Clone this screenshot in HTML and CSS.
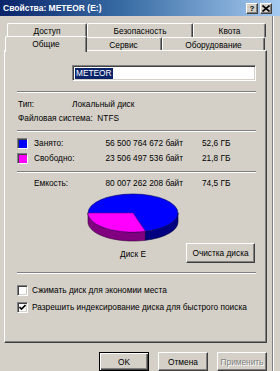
FILE: index.html
```html
<!DOCTYPE html>
<html lang="ru">
<head>
<meta charset="utf-8">
<title>Свойства: METEOR (E:)</title>
<link rel="stylesheet" href="styles.css">
</head>
<body>
<div class="window">
  <div class="titlebar">
    <span class="title">Свойства: METEOR (E:)</span>
    <div class="tbtns">
      <span class="tbtn">?</span>
      <span class="tbtn tclose">
        <svg width="8" height="7" viewBox="0 0 8 7"><path d="M0.5 0.5 L7.5 6.5 M7.5 0.5 L0.5 6.5" stroke="#000" stroke-width="1.6"/></svg>
      </span>
    </div>
  </div>
  <div class="client">
    <div class="tabs">
      <div class="tabrow row1">
        <div class="tab t-access">Доступ</div>
        <div class="tab t-sec">Безопасность</div>
        <div class="tab t-quota">Квота</div>
      </div>
      <div class="tabrow row2">
        <div class="tab t-general active">Общие</div>
        <div class="tab t-service">Сервис</div>
        <div class="tab t-hw">Оборудование</div>
      </div>
    </div>
    <div class="panel">
      <div class="name-row">
        <div class="field"><span class="sel">METEOR</span></div>
      </div>
      <div class="sep s1"></div>
      <div class="info-row r-type"><span class="lbl">Тип:</span><span class="val">Локальный диск</span></div>
      <div class="info-row r-fs"><span>Файловая система:&nbsp; NTFS</span></div>
      <div class="sep s2"></div>
      <div class="stat-row r-used">
        <span class="swatch used"></span><span class="slbl">Занято:</span><span class="bytes">56 500 764 672 байт</span><span></span><span class="gb">52,6 ГБ</span>
      </div>
      <div class="stat-row r-free">
        <span class="swatch free"></span><span class="slbl">Свободно:</span><span class="bytes">23 506 497 536 байт</span><span></span><span class="gb">21,8 ГБ</span>
      </div>
      <div class="sep s3"></div>
      <div class="stat-row r-cap">
        <span></span><span class="slbl">Емкость:</span><span class="bytes">80 007 262 208 байт</span><span></span><span class="gb">74,5 ГБ</span>
      </div>
      <div class="pie-area">
        <div class="pie-col">
          <svg class="pie" width="94" height="49" viewBox="0 0 94 49">
            <path d="M2 20 A45 19 0 0 0 59.4 38.3 L59.4 47.3 A45 19 0 0 1 2 29 Z" fill="#800080" stroke="#400040" stroke-width="0.6"/>
            <path d="M59.4 38.3 A45 19 0 0 0 92 20 L92 29 A45 19 0 0 1 59.4 47.3 Z" fill="#000080" stroke="#000040" stroke-width="0.6"/>
            <ellipse cx="47" cy="20" rx="45" ry="19" fill="#0000ff" stroke="#000060" stroke-width="0.6"/>
            <path d="M47 20 L2 20 A45 19 0 0 0 59.4 38.3 Z" fill="#ff00ff" stroke="#600060" stroke-width="0.5"/>
          </svg>
          <div class="pie-label">Диск E</div>
        </div>
        <div class="btn-col">
          <div class="btn cleanup">Очистка диска</div>
        </div>
      </div>
      <div class="sep s4"></div>
      <div class="check-row c1"><span class="cb"></span><span>Сжимать диск для экономии места</span></div>
      <div class="check-row c2"><span class="cb checked"><svg width="7" height="7" viewBox="0 0 7 7"><path d="M0.5 3 L2.5 5 L6.5 1" fill="none" stroke="#000" stroke-width="1.6"/></svg></span><span>Разрешить индексирование диска для быстрого поиска</span></div>
    </div>
    <div class="buttons">
      <div class="btn default">OK</div>
      <div class="btn">Отмена</div>
      <div class="btn disabled">Применить</div>
    </div>
  </div>
</div>
</body>
</html>
```

FILE: styles.css
```css
* { box-sizing: border-box; }
html, body { margin: 0; padding: 0; }
body {
  width: 280px;
  height: 371px;
  overflow: hidden;
  background: #d4d0c8;
  font-family: "Liberation Sans", Arial, sans-serif;
  font-size: 8.3px;
  color: #000;
}
.window {
  width: 280px;
  height: 371px;
  background: #d4d0c8;
}
.titlebar {
  height: 16px;
  background: linear-gradient(to right, #0a246a, #3a6ea5 45%, #a6caf0);
  display: flex;
  align-items: center;
  justify-content: space-between;
  padding: 0 8px 0 3px;
}
.title {
  color: #fff;
  font-weight: bold;
  font-size: 8.5px;
}
.tbtns { display: flex; gap: 2px; }
.tbtn {
  width: 12px;
  height: 11px;
  background: #d4d0c8;
  border: 1px solid;
  border-color: #fff #404040 #404040 #fff;
  box-shadow: inset -1px -1px 0 #808080;
  font-weight: bold;
  font-size: 8px;
  line-height: 9px;
  text-align: center;
  display: flex;
  align-items: center;
  justify-content: center;
}
.client {
  width: 273px;
  height: 355px;
  border-right: 1px solid #808080;
  box-shadow: 1px 0 0 #fff;
  padding-top: 7px;
}
.tabs {
  height: 27px;
  position: relative;
}
.tabrow { display: flex; height: 14px; }
.row1 { margin-left: 7px; }
.row2 { margin-left: 7px; height: 13px; }
.tab {
  height: 100%;
  border-top: 1px solid #fff;
  border-left: 1px solid #fff;
  border-right: 1px solid #404040;
  box-shadow: inset -1px 0 0 #808080;
  border-radius: 2px 2px 0 0;
  display: flex;
  align-items: center;
  justify-content: center;
  padding-top: 1px;
}
.t-access { width: 80px; }
.t-sec { width: 106px; }
.t-quota { width: 73px; }
.t-general { width: 79px; }
.t-service { width: 77px; }
.t-hw { width: 103px; }
.tab.active {
  position: relative;
  z-index: 2;
  height: 16px;
  margin-left: -2px;
  width: 82px;
  margin-top: -1px;
  margin-right: -2px;
  background: #d4d0c8;
  padding-top: 0;
  padding-bottom: 2px;
}
.panel {
  margin-left: 4px;
  width: 263px;
  height: 293px;
  border: 1px solid;
  border-color: #fff #404040 #404040 #fff;
  box-shadow: inset -1px -1px 0 #808080;
  padding: 0 11px 0 12px;
  display: flex;
  flex-direction: column;
}
.name-row { margin-top: 14px; height: 16px; padding-left: 55px; }
.field {
  width: 184px;
  height: 16px;
  background: #fff;
  border: 1px solid;
  border-color: #808080 #fff #fff #808080;
  box-shadow: inset 1px 1px 0 #404040, inset -1px -1px 0 #d4d0c8;
  padding: 2px 0 0 2px;
}
.sel {
  background: #0a246a;
  color: #fff;
  display: inline-block;
  height: 11px;
  line-height: 11px;
  padding: 0 1px;
}
.sep {
  height: 2px;
  border-top: 1px solid #808080;
  border-bottom: 1px solid #fff;
  width: 239px;
}
.s1 { margin-top: 10px; }
.s2 { margin-top: 5px; }
.s3 { margin-top: 6px; }
.s4 { margin-top: 9px; }
.info-row {
  height: 14px;
  display: flex;
  align-items: center;
  padding-left: 1px;
}
.r-type { margin-top: 4px; }
.info-row .lbl { width: 54px; }
.stat-row {
  height: 14px;
  display: grid;
  grid-template-columns: 17px 66px 83px 19px auto;
  align-items: center;
}
.r-used { margin-top: 4px; }
.r-free { margin-top: 1px; }
.r-cap { margin-top: 3px; }
.bytes { text-align: right; }
.swatch {
  width: 11px;
  height: 11px;
  border: 1px solid;
  border-color: #808080 #fff #fff #808080;
  box-shadow: inset 1px 1px 0 #404040;
}
.swatch.used { background: #0000ff; }
.swatch.free { background: #ff00ff; }
.pie-area {
  margin-top: 3px;
  display: grid;
  grid-template-columns: 69px 94px 1fr;
  height: 70px;
}
.pie-col {
  grid-column: 2;
  display: flex;
  flex-direction: column;
  align-items: center;
}
.pie { display: block; }
.pie-label { margin-top: 5px; height: 14px; line-height: 14px; text-align: center; }
.btn-col {
  grid-column: 3;
  display: flex;
  justify-content: flex-end;
  padding-top: 50px;
  padding-right: 0;
}
.btn {
  height: 20px;
  background: #d4d0c8;
  border: 1px solid;
  border-color: #fff #404040 #404040 #fff;
  box-shadow: inset -1px -1px 0 #808080;
  display: flex;
  align-items: center;
  justify-content: center;
}
.cleanup { width: 69px; }
.check-row {
  height: 14px;
  display: flex;
  align-items: center;
  gap: 4px;
  padding-left: 0;
}
.c1 { margin-top: 9px; }
.c2 { margin-top: 3px; }
.cb {
  width: 11px;
  height: 11px;
  background: #fff;
  border: 1px solid;
  border-color: #808080 #fff #fff #808080;
  box-shadow: inset 1px 1px 0 #404040, inset -1px -1px 0 #d4d0c8;
  display: flex;
  align-items: center;
  justify-content: center;
}
.buttons {
  margin-top: 9px;
  display: flex;
  justify-content: flex-end;
  gap: 9px;
  padding-right: 5px;
}
.buttons .btn { width: 50px; height: 19px; }
.btn.default {
  border: 1px solid #000;
  box-shadow: inset 1px 1px 0 #fff, inset -1px -1px 0 #404040, inset -2px -2px 0 #808080;
}
.btn.disabled {
  color: #808080;
  text-shadow: 1px 1px 0 #fff;
}
```
